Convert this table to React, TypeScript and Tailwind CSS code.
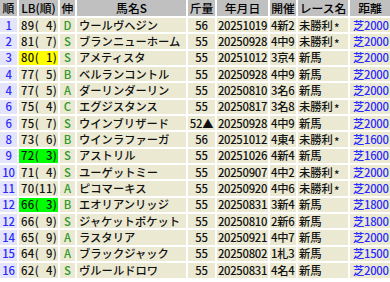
type Row = {
  no: number;
  lb: string;
  hl?: "yellow" | "green";
  nobi: string;
  name: string;
  kin: string;
  date: string;
  kaisai: string;
  race: string;
  dist: string;
};

const rows: Row[] = [
  { no: 1, lb: "89( 4)", nobi: "D", name: "ウールヴヘジン", kin: "56", date: "20251019", kaisai: "4新2", race: "未勝利*", dist: "芝2000" },
  { no: 2, lb: "81( 7)", nobi: "S", name: "ブランニューホーム", kin: "55", date: "20250928", kaisai: "4中9", race: "未勝利*", dist: "芝2000" },
  { no: 3, lb: "80( 1)", hl: "yellow", nobi: "S", name: "アメティスタ", kin: "55", date: "20251012", kaisai: "3京4", race: "新馬", dist: "芝2000" },
  { no: 4, lb: "77( 5)", nobi: "B", name: "ベルランコントル", kin: "55", date: "20250928", kaisai: "4中9", race: "新馬", dist: "芝2000" },
  { no: 4, lb: "77( 5)", nobi: "A", name: "ダーリンダーリン", kin: "55", date: "20250810", kaisai: "3名6", race: "新馬", dist: "芝2000" },
  { no: 6, lb: "75( 4)", nobi: "C", name: "エグジスタンス", kin: "55", date: "20250817", kaisai: "3名8", race: "未勝利*", dist: "芝2000" },
  { no: 6, lb: "75( 7)", nobi: "S", name: "ウインブリザード", kin: "52▲", date: "20250928", kaisai: "4中9", race: "新馬", dist: "芝2000" },
  { no: 8, lb: "73( 6)", nobi: "B", name: "ウインラファーガ", kin: "56", date: "20251012", kaisai: "4東4", race: "未勝利*", dist: "芝1600" },
  { no: 9, lb: "72( 3)", hl: "green", nobi: "S", name: "アストリル", kin: "55", date: "20251026", kaisai: "4新4", race: "新馬", dist: "芝1600" },
  { no: 10, lb: "71( 4)", nobi: "S", name: "ユーゲットミー", kin: "55", date: "20250907", kaisai: "4中2", race: "未勝利*", dist: "芝2000" },
  { no: 11, lb: "70(11)", nobi: "A", name: "ピコマーキス", kin: "55", date: "20250920", kaisai: "4中6", race: "未勝利*", dist: "芝2000" },
  { no: 12, lb: "66( 3)", hl: "green", nobi: "B", name: "エオリアンリッジ", kin: "55", date: "20250831", kaisai: "3新4", race: "新馬", dist: "芝1800" },
  { no: 12, lb: "66( 9)", nobi: "S", name: "ジャケットポケット", kin: "55", date: "20250810", kaisai: "2新6", race: "新馬", dist: "芝1800" },
  { no: 14, lb: "65( 9)", nobi: "A", name: "ラスタリア", kin: "55", date: "20250921", kaisai: "4中7", race: "新馬", dist: "芝2000" },
  { no: 15, lb: "64( 9)", nobi: "A", name: "ブラックジャック", kin: "55", date: "20250802", kaisai: "1札3", race: "新馬", dist: "芝1500" },
  { no: 16, lb: "62( 4)", nobi: "S", name: "ヴルールドロワ", kin: "55", date: "20250831", kaisai: "4名4", race: "新馬", dist: "芝2000" },
];

const headers = ["順", "LB(順)", "伸", "馬名S", "斤量", "年月日", "開催", "レース名", "距離"];

export default function App() {
  return (
    <div
      className="w-[390px] h-[282px] bg-white overflow-hidden text-[11.3px] leading-none text-[#111] font-medium"
      style={{ fontFamily: '"Noto Sans CJK JP", "Noto Sans", sans-serif' }}
    >
      <div className="grid grid-cols-[17px_39px_15px_109px_27px_51px_26px_50px_1fr] grid-rows-[16px] auto-rows-[14.35px] gap-[2px]">
        {headers.map((h) => (
          <div key={h} className="bg-[#c0c0c0] text-black flex items-center justify-center whitespace-nowrap overflow-hidden text-[11.8px]">
            {h}
          </div>
        ))}
        {rows.map((r, i) => (
          <RowCells key={i} r={r} />
        ))}
      </div>
    </div>
  );
}

function RaceName({ text }: { text: string }) {
  if (!text.endsWith("*")) return <>{text}</>;
  return (
    <>
      {text.slice(0, -1)}
      <span className="translate-y-[2px] pl-[1px]">*</span>
    </>
  );
}

function RowCells({ r }: { r: Row }) {
  const lbBg = r.hl === "yellow" ? "bg-[#ffff00]" : r.hl === "green" ? "bg-[#00ff00]" : "bg-[#ebe9d2]";
  const cell = "flex items-center whitespace-nowrap overflow-hidden";
  return (
    <>
      <div className={`${cell} justify-center bg-[#e4e4fa] text-[#2a2aff] tracking-[-0.3px]`}>{r.no}</div>
      <div className={`${cell} ${lbBg} pl-[2px] tracking-[0.4px]`}>{r.lb.replace(" ", "\u2007")}</div>
      <div className={`${cell} justify-center bg-[#ebe9d2] text-[#2e9a2e]`}>{r.nobi}</div>
      <div className={`${cell} bg-[#ebe9d2] pl-[2px]`}>{r.name}</div>
      <div className={`${cell} justify-center bg-[#ebe9d2] overflow-visible tracking-[-0.3px]`}>{r.kin}</div>
      <div className={`${cell} justify-center bg-[#ebe9d2] tracking-[-0.3px]`}>{r.date}</div>
      <div className={`${cell} bg-[#ebe9d2] pl-[1px] tracking-[-0.3px]`}>{r.kaisai}</div>
      <div className="flex items-center whitespace-nowrap bg-[#ebe9d2] pl-[1px]">
        <RaceName text={r.race} />
      </div>
      <div className={`${cell} bg-[#ebe9d2] pl-[3px] text-[#2a2aff] tracking-[-0.3px]`}>{r.dist}</div>
    </>
  );
}
